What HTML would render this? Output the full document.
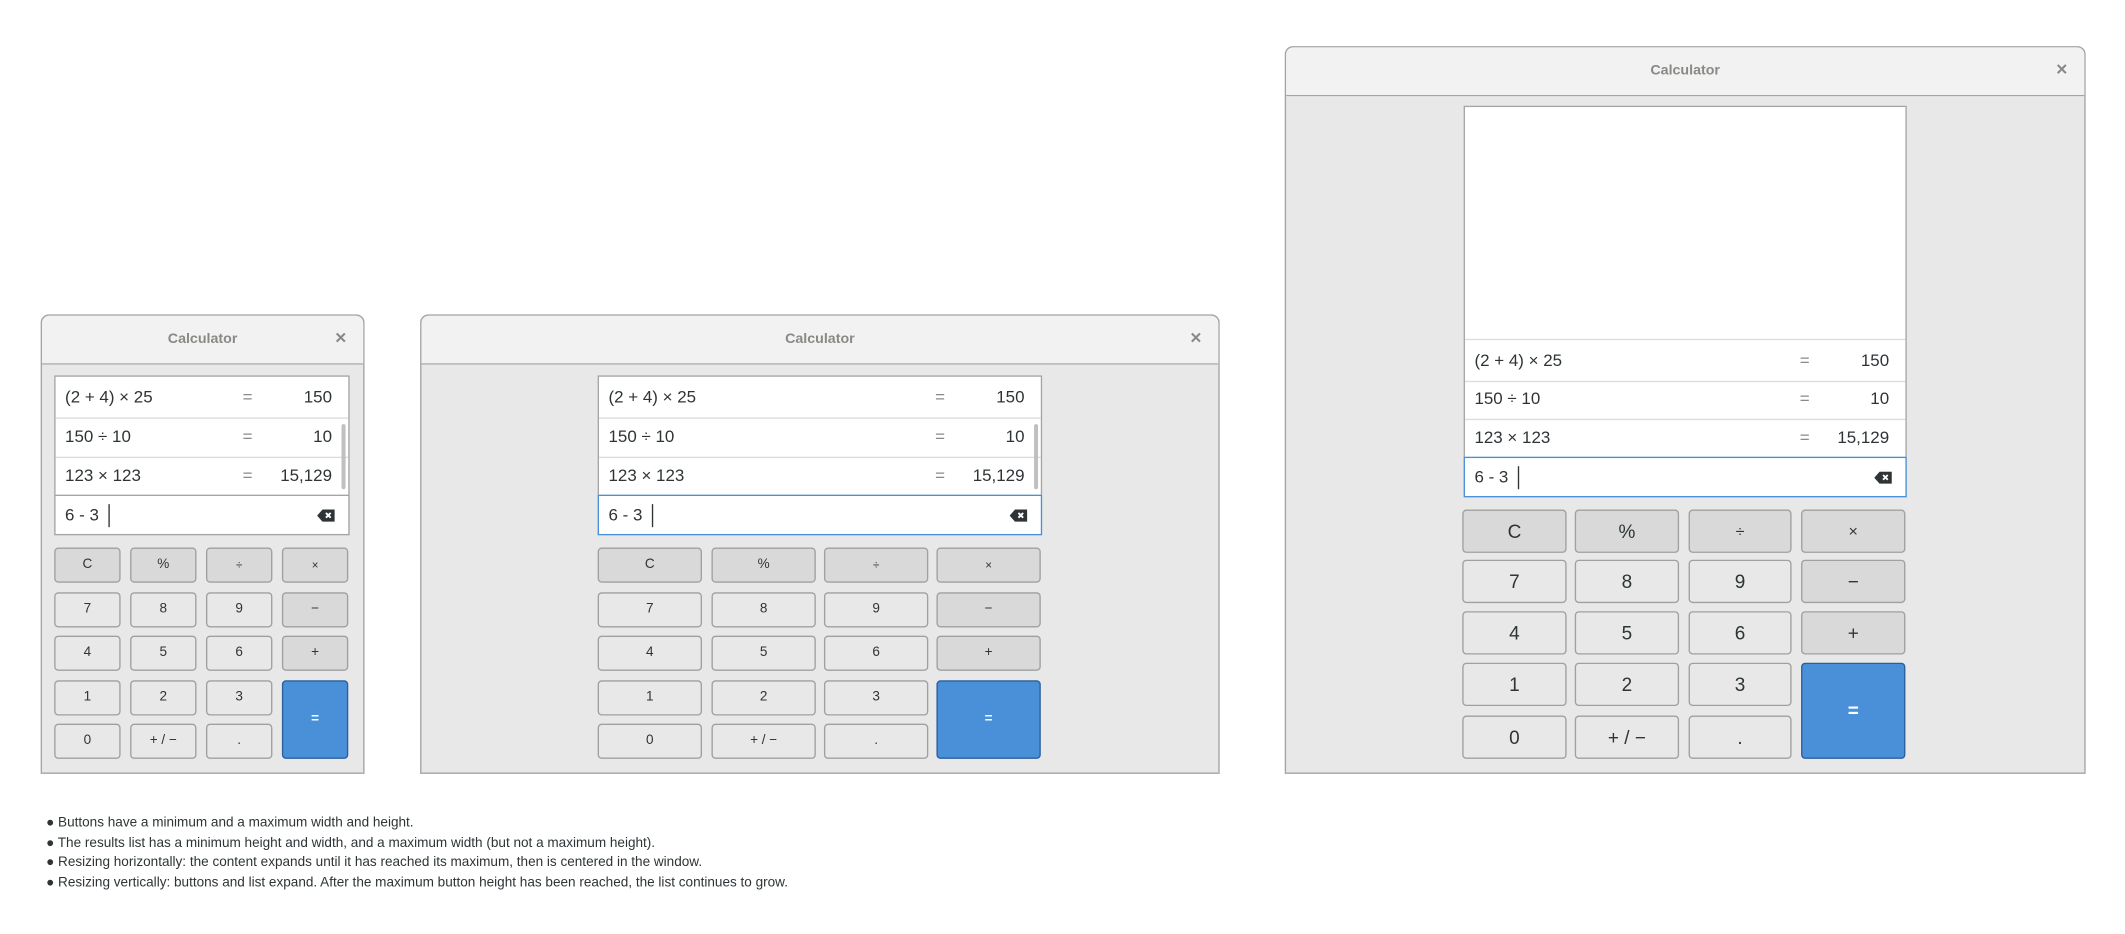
<!DOCTYPE html>
<html><head><meta charset="utf-8">
<style>
html,body{margin:0;padding:0;background:#fff;width:2125px;height:934px;overflow:hidden}
#root{position:absolute;left:0;top:0;width:1568px;height:689px;transform:scale(1.3552);transform-origin:0 0;font-family:"Liberation Sans",sans-serif;color:#2e3436}
.win{position:absolute;background:#e8e8e8;border:1px solid #a4a4a4;border-radius:6px 6px 0 0;box-sizing:border-box}
.tb{position:absolute;left:0;right:0;top:0;background:#f2f2f2;border-bottom:1px solid #a4a4a4;border-radius:6px 6px 0 0;text-align:center;color:#888a85;font-weight:bold;font-size:10.5px}
.cl{position:absolute;right:12px;color:#888;font-size:11px}
.list{position:absolute;background:#fff;border:1px solid #a4a4a4;box-sizing:border-box}
.row{position:absolute;left:0;right:0;border-bottom:1px solid #dcdcdc;font-size:12.5px;color:#2e3436}
.row span{position:absolute}
.row .e{color:#8a8a8a}
.entry{position:absolute;background:#fff;box-sizing:border-box;font-size:12.5px}
.btn{position:absolute;box-sizing:border-box;border:1px solid #a0a0a0;border-radius:3px;background:#e8e8e8;text-align:center;color:#2e3436}
.op{background:#d9d9d9}
.eq{background:#4a90d9;border-color:#2a5f9e;color:#fff;font-weight:bold}
.sb{position:absolute;width:3px;background:#c0c0c0;border-radius:2px}
.notes{position:absolute;left:34px;top:601px;font-family:"Liberation Sans Narrow","Liberation Sans",sans-serif;font-size:10px;color:#2e3436;line-height:14.6px}
</style></head><body><div id="root"></div>
<script>
var R=document.getElementById('root'),h='';
function win(x,y,w,hh,tbh){h+='<div class="win" style="left:'+x+'px;top:'+y+'px;width:'+w+'px;height:'+hh+'px"><div class="tb" style="height:'+tbh+'px;line-height:'+tbh+'px">Calculator<span class="cl">✕</span></div></div>';}
function list(x,y,w,rows,entryTop,entryH,blue,sb,lx){
 var bot=entryTop+entryH;
 h+='<div class="list" style="left:'+x+'px;top:'+y+'px;width:'+w+'px;height:'+(bot-y)+'px">';
 var data=[['(2 + 4) × 25','150'],['150 ÷ 10','10'],['123 × 123','15,129']];
 for(var i=0;i<3;i++){var t=rows[i]-y,hh=rows[i+1]-rows[i];
  h+='<div class="row" style="top:'+t+'px;height:'+hh+'px;line-height:'+hh+'px'+(i==0&&rows[0]-y>5?';border-top:1px solid #dcdcdc':'')+'"><span style="left:7px">'+data[i][0]+'</span><span class="e" style="left:'+(w-lx)+'px">=</span><span style="right:12px">'+data[i][1]+'</span></div>';}
 h+='</div>';
 h+='<div class="entry" style="left:'+x+'px;top:'+entryTop+'px;width:'+w+'px;height:'+entryH+'px;line-height:'+(entryH-2)+'px;border:1px solid '+(blue?'#4a90d9':'#a4a4a4')+'"><span style="position:absolute;left:7px">6 - 3</span><span style="position:absolute;left:39px;top:6px;width:1px;height:'+(entryH-13)+'px;background:#2e3436"></span>'+
 '<svg style="position:absolute;right:10px;top:'+(entryH/2-5)+'px" width="13" height="9" viewBox="0 0 13 9"><path d="M4 0H13V9H4L0 4.5Z" fill="#2e3436"/><path d="M6.5 2.5L10 6M10 2.5L6.5 6" stroke="#fff" stroke-width="1.4"/></svg></div>';
 if(sb)h+='<div class="sb" style="left:'+(x+w-6)+'px;top:'+(rows[1]+6)+'px;height:48px"></div>';
}
function btns(cols,rows,fs){
 var L=[['C','%','÷','×'],['7','8','9','−'],['4','5','6','+'],['1','2','3',''],['0','+ / −','.','']];
 for(var r=0;r<5;r++)for(var c=0;c<4;c++){
  if(c==3&&r>=3)continue;
  var cls='btn'+((r==0||c==3)?' op':'');
  var f=fs;if(L[r][c]=='×'||L[r][c]=='÷')f=fs*0.85;
  h+='<div class="'+cls+'" style="left:'+cols[c][0]+'px;top:'+rows[r][0]+'px;width:'+(cols[c][1]-cols[c][0])+'px;height:'+(rows[r][1]-rows[r][0])+'px;line-height:'+(rows[r][1]-rows[r][0]-2)+'px;font-size:'+f+'px">'+L[r][c]+'</div>';
 }
 h+='<div class="btn eq" style="left:'+cols[3][0]+'px;top:'+rows[3][0]+'px;width:'+(cols[3][1]-cols[3][0])+'px;height:'+(rows[4][1]-rows[3][0])+'px;line-height:'+(rows[4][1]-rows[3][0]-2)+'px;font-size:'+fs+'px">=</div>';
}
var sr=[[404,430],[437,463],[469,495],[502,528],[534,560]];
win(30,232,239,339,35);
list(40,277,218,[277,307,336,365],365,30,false,true,80);
btns([[40,89],[96,145],[152,201],[208,257]],sr,10);
win(310,232,590,339,35);
list(441,277,328,[277,307,336,365],365,30,true,true,80);
btns([[441,518],[525,602],[608,685],[691,768]],sr,10);
win(948,34,591,537,35);
list(1080,78,327,[249,279,308,337],337,30,true,false,80);
btns([[1079,1156],[1162,1239],[1246,1322],[1329,1406]],[[376,408],[413,445],[451,483],[489,521],[528,560]],14);
h+='<div class="notes">● Buttons have a minimum and a maximum width and height.<br>● The results list has a minimum height and width, and a maximum width (but not a maximum height).<br>● Resizing horizontally: the content expands until it has reached its maximum, then is centered in the window.<br>● Resizing vertically: buttons and list expand. After the maximum button height has been reached, the list continues to grow.</div>';
R.innerHTML=h;
</script></body></html>
